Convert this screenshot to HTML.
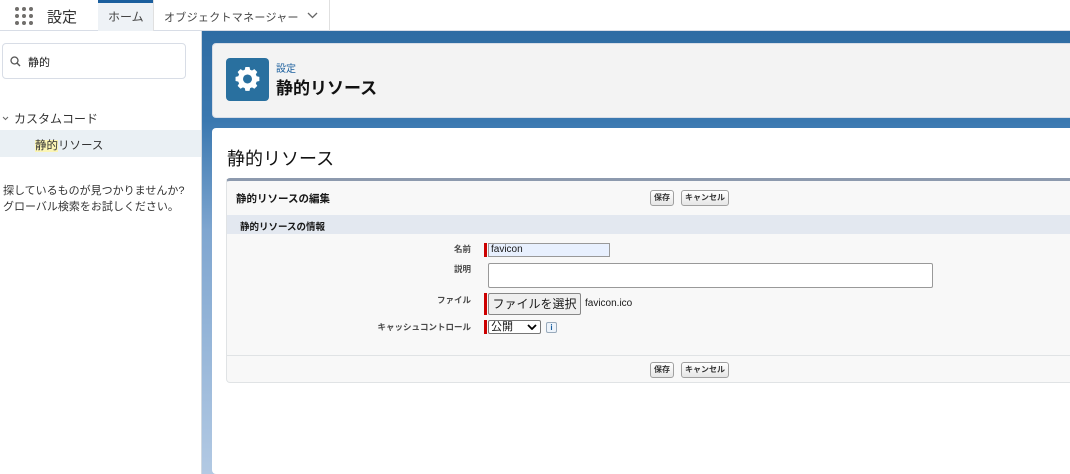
<!DOCTYPE html>
<html><head><meta charset="utf-8"><style>
*{box-sizing:border-box;margin:0;padding:0}
body{width:1070px;height:474px;overflow:hidden;font-family:"Liberation Sans","Noto Sans CJK JP",sans-serif;background:#fff;position:relative;color:#181818}
.abs{position:absolute}
.btn{position:absolute;height:16px;border:1px solid #a0a0a0;border-radius:3px;background:linear-gradient(#fff,#e6e6e6);font-size:8px;font-weight:bold;line-height:14px;padding:0 3px;color:#333}
.lbl{position:absolute;font-size:8.5px;font-weight:bold;color:#4a4a4a;text-align:right;width:120px}
.req{position:absolute;width:3px;background:#c00}
</style></head><body>
<div class="abs" style="left:0;top:0;width:1070px;height:31px;background:#fff;border-bottom:1px solid #d8dde6"></div>
<svg class="abs" style="left:14px;top:6px" width="20" height="20">
<g fill="#706e6b"><circle cx="3" cy="3" r="2"/><circle cx="10" cy="3" r="2"/><circle cx="17" cy="3" r="2"/><circle cx="3" cy="10" r="2"/><circle cx="10" cy="10" r="2"/><circle cx="17" cy="10" r="2"/><circle cx="3" cy="17" r="2"/><circle cx="10" cy="17" r="2"/><circle cx="17" cy="17" r="2"/></g></svg>
<div class="abs" style="left:47px;top:6px;font-size:15px;color:#333">設定</div>
<div class="abs" style="left:98px;top:0;width:55px;height:31px;background:#eef2f6;border-top:3px solid #1b5f9e"></div>
<div class="abs" style="left:108px;top:8px;font-size:12px;color:#444">ホーム</div>
<div class="abs" style="left:153px;top:0;width:1px;height:31px;background:#e0e0e0"></div>
<div class="abs" style="left:164px;top:9px;font-size:11px;color:#444;letter-spacing:0.3px">オブジェクトマネージャー</div>
<svg class="abs" style="left:307px;top:12px" width="11" height="7"><path d="M1 1l4.5 4.5L10 1" stroke="#666" stroke-width="1.3" fill="none"/></svg>
<div class="abs" style="left:329px;top:0;width:1px;height:31px;background:#e0e0e0"></div>
<div class="abs" style="left:2px;top:43px;width:184px;height:36px;border:1px solid #d8dde6;border-radius:4px"></div>
<svg class="abs" style="left:10px;top:56px" width="11" height="11"><circle cx="4.5" cy="4.5" r="3.5" stroke="#555" stroke-width="1.3" fill="none"/><path d="M7 7l3 3" stroke="#555" stroke-width="1.4"/></svg>
<div class="abs" style="left:28px;top:54px;font-size:11px">静的</div>
<svg class="abs" style="left:2px;top:116px" width="7" height="5"><path d="M1 1l2.5 2.5L6 1" stroke="#666" stroke-width="1" fill="none"/></svg>
<div class="abs" style="left:14px;top:110px;font-size:12px;color:#333">カスタムコード</div>
<div class="abs" style="left:0;top:130px;width:201px;height:27px;background:#eaf0f4"></div>
<div class="abs" style="left:35px;top:137px;font-size:11.5px;color:#333"><span style="background:#fbf5b4">静的</span>リソース</div>
<div class="abs" style="left:3px;top:183px;font-size:11px;line-height:16px;color:#333">探しているものが見つかりませんか?<br>グローバル検索をお試しください。</div>
<div class="abs" style="left:201px;top:31px;width:869px;height:443px;background:linear-gradient(#2e6ca3 0px,#3a78b0 90px,#7fa6d0 200px,#b2c9e3 443px)"></div>
<div class="abs" style="left:201px;top:31px;width:1px;height:443px;background:#d0d8e0"></div>
<div class="abs" style="left:212px;top:43px;width:870px;height:75px;background:#f3f3f3;border-radius:4px;border:1px solid #d8dde6"></div>
<div class="abs" style="left:226px;top:58px;width:43px;height:43px;background:#29709f;border-radius:4px"></div>
<svg class="abs" style="left:234px;top:66px" width="27" height="27" viewBox="0 0 24 24"><path fill="#fff" d="M10 2h4l.6 2.6 1.8.8 2.3-1.4 2.8 2.8-1.4 2.3.8 1.8L23.5 11.5v4l-2.6.6-.8 1.8 1.4 2.3-2.8 2.8-2.3-1.4-1.8.8L14 25h-4l-.6-2.6-1.8-.8-2.3 1.4-2.8-2.8 1.4-2.3-.8-1.8L.5 15.5v-4l2.6-.6.8-1.8L2.5 6.8 5.3 4l2.3 1.4 1.8-.8z" transform="scale(.92) translate(1,-1)"/><circle cx="12" cy="11.5" r="4" fill="#29709f"/></svg>
<div class="abs" style="left:276px;top:60px;font-size:10px;color:#1b5f9e">設定</div>
<div class="abs" style="left:276px;top:74px;font-size:17px;font-weight:bold;color:#111">静的リソース</div>
<div class="abs" style="left:212px;top:128px;width:870px;height:346px;background:#fff;border-radius:4px"></div>
<div class="abs" style="left:227px;top:145px;font-size:18px;color:#111">静的リソース</div>
<div class="abs" style="left:226px;top:178px;width:850px;height:205px;background:#f8f8f8;border:1px solid #e0e3e5;border-top:3px solid #8d9aae;border-radius:4px"></div>
<div class="abs" style="left:236px;top:191px;font-size:10.5px;font-weight:bold">静的リソースの編集</div>
<div class="btn" style="left:650px;top:190px">保存</div>
<div class="btn" style="left:681px;top:190px">キャンセル</div>
<div class="abs" style="left:227px;top:215px;width:849px;height:19px;background:#e3e8f0"></div>
<div class="abs" style="left:240px;top:219px;font-size:9.5px;font-weight:bold">静的リソースの情報</div>
<div class="lbl" style="left:351px;top:243px">名前</div>
<div class="req" style="left:484px;top:243px;height:14px"></div>
<div class="abs" style="left:488px;top:243px;width:122px;height:14px;background:#e8f0fe;border:1px solid #999;font-size:10px;line-height:12px;padding-left:2px">favicon</div>
<div class="lbl" style="left:351px;top:263px">説明</div>
<div class="abs" style="left:488px;top:263px;width:445px;height:25px;background:#fff;border:1px solid #999;border-radius:2px"></div>
<div class="lbl" style="left:351px;top:294px">ファイル</div>
<div class="req" style="left:484px;top:293px;height:22px"></div>
<div class="abs" style="left:488px;top:293px;width:93px;height:22px;background:#efefef;border:1px solid #888;border-radius:2px;font-size:12px;line-height:20px;text-align:center">ファイルを選択</div>
<div class="abs" style="left:585px;top:298px;font-size:10px">favicon.ico</div>
<div class="lbl" style="left:351px;top:321px">キャッシュコントロール</div>
<div class="req" style="left:484px;top:320px;height:14px"></div>
<div class="abs" style="left:488px;top:320px;width:53px;height:14px;background:#fff;border:1px solid #777;border-radius:2px;font-size:11px;line-height:12px;padding-left:2px">公開</div>
<svg class="abs" style="left:527px;top:324px" width="10" height="6"><path d="M1 1l4 4 4-4" stroke="#000" stroke-width="1.8" fill="none"/></svg>
<div class="abs" style="left:546px;top:322px;width:11px;height:11px;border:1px solid #9ab;border-radius:2px;background:#eef4fb;font-size:8px;font-weight:bold;color:#1b5f9e;text-align:center;line-height:9px">i</div>
<div class="abs" style="left:227px;top:355px;width:849px;height:1px;background:#e0e3e5"></div>
<div class="btn" style="left:650px;top:362px">保存</div>
<div class="btn" style="left:681px;top:362px">キャンセル</div>
</body></html>
